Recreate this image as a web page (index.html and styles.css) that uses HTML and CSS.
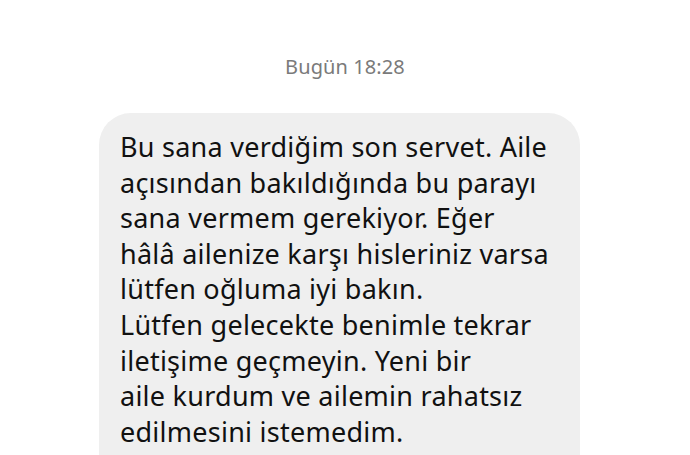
FILE: index.html
```html
<!DOCTYPE html>
<html lang="tr">
<head>
<meta charset="utf-8">
<link rel="stylesheet" href="styles.css">
</head>
<body>
<div class="chat">
  <div class="stamp">Bugün 18:28</div>
  <div class="bubble">
    <p class="msg">Bu sana verdiğim son servet. Aile<br>açısından bakıldığında bu parayı<br>sana vermem gerekiyor. Eğer<br>hâlâ ailenize karşı hisleriniz varsa<br>lütfen oğluma iyi bakın.<br>Lütfen gelecekte benimle tekrar<br>iletişime geçmeyin. Yeni bir<br>aile kurdum ve ailemin rahatsız<br>edilmesini istemedim.</p>
  </div>
</div>
</body>
</html>
```
FILE: styles.css
```css
html, body {
  margin: 0;
  padding: 0;
  background: #ffffff;
  overflow: hidden;
  height: 455px;
}
.chat {
  display: flex;
  flex-direction: column;
  font-family: "Noto Sans", Roboto, sans-serif;
  padding-top: 53px;
}
.stamp {
  align-self: center;
  font-size: 20px;
  line-height: 28px;
  color: #7a7a7a;
  letter-spacing: 0.1px;
}
.bubble {
  margin-top: 32px;
  margin-left: 99px;
  width: 481px;
  background: #efefef;
  border-radius: 32px;
  padding: 16px 20px 60px 21px;
  box-sizing: border-box;
}
.msg {
  margin: 0;
  font-size: 27px;
  line-height: 35.6px;
  letter-spacing: 0.25px;
  color: #111111;
}
```
